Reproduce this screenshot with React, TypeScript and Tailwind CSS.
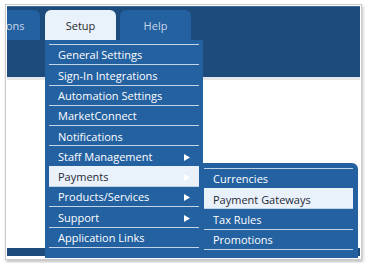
import React from "react";

const setupItems = [
  { label: "General Settings" },
  { label: "Sign-In Integrations" },
  { label: "Automation Settings" },
  { label: "MarketConnect" },
  { label: "Notifications" },
  { label: "Staff Management", sub: true },
  { label: "Payments", sub: true, active: true },
  { label: "Products/Services", sub: true },
  { label: "Support", sub: true },
  { label: "Application Links" },
  { label: "" },
];

const paymentItems = [
  { label: "Currencies" },
  { label: "Payment Gateways", active: true },
  { label: "Tax Rules" },
  { label: "Promotions" },
  { label: "" },
];

function Arrow() {
  return (
    <svg width="6" height="7" viewBox="0 0 6 7" className="ml-auto mr-[9px] shrink-0">
      <polygon points="0,0 6,3.5 0,7" fill="#ffffff" />
    </svg>
  );
}

export default function App() {
  return (
    <div
      className="w-[366px] h-[263px] bg-white overflow-hidden"
      style={{ fontFamily: '"Open Sans", "Noto Sans", sans-serif' }}
    >
      <div className="ml-[5px] mt-[4px] w-[357px] h-[256px] border border-[#cbcbcb] bg-white p-px shadow-[1px_2px_3px_rgba(0,0,0,0.25)]">
        <div className="relative h-full overflow-hidden bg-white">
          {/* top navigation */}
          <div className="h-[71px] bg-[#1c4b7c] border-t border-[#3d6a98]">
            <div className="flex pt-[3px] text-[11px]">
              <div className="-ml-[37px] w-[70px] h-[30px] pt-[2px] rounded-t-[6px] bg-[#2361a0] text-[#c9d7ea] flex items-center justify-center">
                Addons
              </div>
              <div className="ml-[5px] w-[71px] h-[30px] pt-[2px] rounded-t-[6px] bg-[#e9f1fb] text-[#2a2a2a] flex items-center justify-center">
                Setup
              </div>
              <div className="ml-[4px] w-[71px] h-[30px] pt-[2px] rounded-t-[6px] bg-[#2361a0] text-[#c9d7ea] flex items-center justify-center">
                Help
              </div>
            </div>
          </div>
          <div className="h-[3px] bg-[#e3e7ec]" />
          <div className="h-[168px]" />
          <div className="h-[8px] bg-[#1c4b7c]" />

          {/* Setup dropdown */}
          <div className="absolute left-[38px] top-[34px] w-[158px] h-[230px] bg-[#2361a1] pt-[4px]">
            {setupItems.map((it, i) => (
              <div
                key={i}
                className={
                  "mx-[4px] h-[20.3px] pt-[2px] border-t border-[#c3d3e6] flex items-center pl-[9px] text-[11px] " +
                  (it.active ? "bg-[#e9f1fb] text-[#1f2a36] border-[#e9f1fb]" : "text-white")
                }
              >
                <span>{it.label}</span>
                {it.sub && <Arrow />}
              </div>
            ))}
          </div>

          {/* Payments submenu */}
          <div className="absolute left-[196px] top-[157px] w-[155px] h-[110px] bg-[#2361a1] rounded-tr-[6px] pt-[5px]">
            {paymentItems.map((it, i) => (
              <div
                key={i}
                className={
                  "ml-px mr-[5px] h-[20.2px] pt-[2px] border-t border-[#c3d3e6] flex items-center pl-[9px] text-[11px] " +
                  (it.active ? "bg-[#e9f1fb] text-[#1f2a36] border-[#e9f1fb]" : "text-white")
                }
              >
                {it.label}
              </div>
            ))}
          </div>
        </div>
      </div>
    </div>
  );
}
